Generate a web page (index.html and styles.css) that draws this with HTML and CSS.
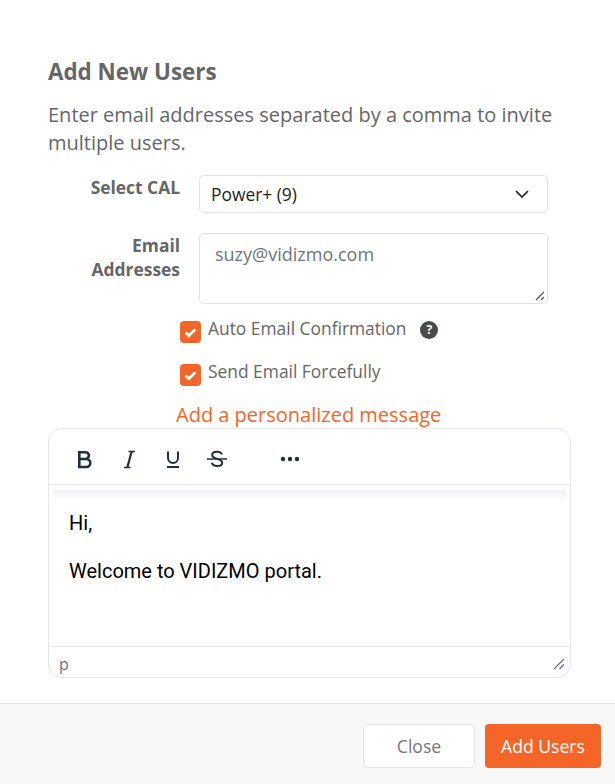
FILE: index.html
```html
<!DOCTYPE html>
<html lang="en">
<head>
    <meta charset="UTF-8">
    <meta name="viewport" content="width=device-width, initial-scale=1.0">
    <title>Add New Users</title>
    <link rel="stylesheet" href="styles.css">
</head>
<body>

<div class="modal-body">
    <h1>Add New Users</h1>
    <p class="intro">Enter email addresses separated by a comma to invite multiple users.</p>

    <div class="form-row cal-row">
        <label class="row-label">Select CAL</label>
        <div class="select-box">
            <span>Power+ (9)</span>
            <svg class="chevron" width="14" height="8" viewBox="0 0 14 8"><path d="M1 1l6 6 6-6" fill="none" stroke="#222" stroke-width="1.7"/></svg>
        </div>
    </div>

    <div class="form-row email-row">
        <label class="row-label">Email Addresses</label>
        <div class="email-box">
            <span>suzy@vidizmo.com</span>
            <svg class="grip" width="10" height="10" viewBox="0 0 10 10"><path d="M1 9l8-8M6 9l3-3" stroke="#555" stroke-width="1.2"/></svg>
        </div>
    </div>

    <div class="check-row first">
        <span class="check-box">
            <svg width="13" height="11" viewBox="0 0 12 10"><path d="M1.5 5l3 3 6-6" fill="none" stroke="#fff" stroke-width="2.6"/></svg>
        </span>
        <span class="check-text">Auto Email Confirmation</span>
        <span class="help-icon">?</span>
    </div>
    <div class="check-row">
        <span class="check-box">
            <svg width="13" height="11" viewBox="0 0 12 10"><path d="M1.5 5l3 3 6-6" fill="none" stroke="#fff" stroke-width="2.6"/></svg>
        </span>
        <span class="check-text">Send Email Forcefully</span>
    </div>

    <div class="message-link">Add a personalized message</div>

    <div class="editor">
        <div class="toolbar">
            <svg class="tool" width="24" height="24" viewBox="0 0 24 24"><path d="M6.300 5.200h6.200a3.400 3.400 0 0 1 0 6.800H6.300zM6.300 12h7a4 4 0 0 1 0 8h-7z" fill="none" stroke="#222f3e" stroke-width="2.600"/></svg>
            <svg class="tool" width="24" height="24" viewBox="0 0 24 24"><path d="M11.500 4.500h6.500M7 20.500h6.500" fill="none" stroke="#222f3e" stroke-width="1.300"/><path d="M14.700 4.500L10.300 20.500" fill="none" stroke="#222f3e" stroke-width="2.200"/></svg>
            <svg class="tool" width="24" height="24" viewBox="0 0 24 24"><path d="M7 4.500v6.500a5 5 0 0 0 10 0V4.500" fill="none" stroke="#222f3e" stroke-width="2"/><path d="M6 20h12" stroke="#222f3e" stroke-width="2"/></svg>
            <svg class="tool" width="24" height="24" viewBox="0 0 24 24"><path d="M17 7.500c-.5-1.800-2.300-2.800-5-2.800-3 0-4.800 1.400-4.800 3.400 0 4.500 10 3 10 7.600 0 2-2 3.300-5 3.300-2.800 0-4.800-1.100-5.300-3.200" fill="none" stroke="#222f3e" stroke-width="2"/><path d="M2 12h20" stroke="#222f3e" stroke-width="1.600"/></svg>
            <svg class="tool more" width="24" height="24" viewBox="0 0 24 24"><circle cx="5" cy="12" r="2.200" fill="#222f3e"/><circle cx="12" cy="12" r="2.200" fill="#222f3e"/><circle cx="19" cy="12" r="2.200" fill="#222f3e"/></svg>
        </div>
        <div class="toolbar-shadow"></div>
        <div class="editor-content">
            <p>Hi,</p>
            <p>Welcome to VIDIZMO portal.</p>
        </div>
        <div class="statusbar">
            <span>p</span>
            <svg width="12" height="12" viewBox="0 0 12 12"><path d="M1 11L11 1M6.500 11L11 6.500" stroke="#6b7280" stroke-width="1.300"/></svg>
        </div>
    </div>
</div>

<div class="modal-footer">
    <a href="#" class="button close">Close</a>
    <a href="#" class="button add">Add Users</a>
</div>

</body>
</html>
```

FILE: styles.css
```css
body {
    font-family: 'Open Sans', sans-serif;
    background-color: #fff;
    color: #666;
    margin: 0;
    padding: 0;
}
.modal-body {
    height: 703px;
    padding: 57px 44px 0 48px;
    box-sizing: border-box;
}
h1 {
    margin: 0;
    font-size: 22.400px;
    line-height: 30px;
    font-weight: 700;
    color: #666;
}
.intro {
    margin: 14px 0 0;
    font-size: 20px;
    line-height: 28px;
    color: #666;
}
.form-row {
    display: flex;
    width: 500px;
}
.cal-row {
    margin-top: 18px;
}
.email-row {
    margin-top: 20px;
}
.row-label {
    width: 132px;
    margin-right: 19px;
    flex-shrink: 0;
    text-align: right;
    font-size: 17.400px;
    line-height: 24px;
    font-weight: 700;
    color: #666;
}
.select-box {
    flex: 1;
    height: 38px;
    box-sizing: border-box;
    border: 1px solid #e3e3e3;
    border-radius: 5px;
    display: flex;
    align-items: center;
    justify-content: space-between;
    padding: 0 18px 0 11px;
    font-size: 17.400px;
    color: #222;
}
.email-box {
    flex: 1;
    height: 71px;
    box-sizing: border-box;
    border: 1px solid #e3e3e3;
    border-radius: 5px;
    padding: 6px 15px;
    font-size: 18px;
    line-height: 28px;
    color: #6c757d;
    position: relative;
}
.grip {
    position: absolute;
    right: 2px;
    bottom: 2px;
}
.check-row {
    display: flex;
    align-items: center;
    margin: 21px 0 0 132px;
    height: 22px;
}
.check-row.first {
    margin-top: 17px;
}
.check-box {
    width: 21px;
    height: 22px;
    border-radius: 4px;
    background-color: #f56528;
    display: flex;
    align-items: center;
    justify-content: center;
    flex-shrink: 0;
}
.check-text {
    margin: 0 0 0 7px;
    font-size: 17.400px;
    position: relative;
    top: -4px;
    color: #666;
}
.help-icon {
    width: 18px;
    height: 18px;
    margin: -4px 0 0 14px;
    border-radius: 50%;
    background-color: #4a4a4a;
    color: #fff;
    font-size: 12px;
    font-weight: 700;
    text-align: center;
    line-height: 18px;
}
.message-link {
    margin: 15px 0 0 128px;
    font-size: 20px;
    line-height: 28px;
    color: #f56528;
}
.editor {
    height: 250px;
    box-sizing: border-box;
    width: 523px;
    margin-top: -1px;
    border: 1px solid #e3e6ea;
    border-radius: 14px;
    display: flex;
    flex-direction: column;
    overflow: hidden;
}
.toolbar {
    height: 56px;
    flex-shrink: 0;
    box-sizing: border-box;
    border-bottom: 1px solid #e3e6ea;
    display: flex;
    align-items: center;
    padding: 4px 0 0 24px;
    gap: 20px;
}
.tool.more {
    margin-left: 29px;
}
.toolbar-shadow {
    height: 5px;
    flex-shrink: 0;
    background-color: #fff;
    position: relative;
}
.toolbar-shadow::after {
    content: "";
    position: absolute;
    top: 100%;
    left: 4px;
    right: 4px;
    height: 12px;
    background: linear-gradient(rgba(34, 47, 62, 0.07), rgba(34, 47, 62, 0));
}
.editor-content {
    flex: 1;
    padding: 21px 20px 0;
    font-family: 'Roboto', sans-serif;
    font-size: 20px;
    line-height: 24px;
    color: #000;
}
.editor-content p {
    margin: 0 0 24px;
}
.statusbar {
    height: 31px;
    flex-shrink: 0;
    box-sizing: border-box;
    border-top: 1px solid #e3e6ea;
    display: flex;
    align-items: center;
    justify-content: space-between;
    padding: 4px 5px 0 10px;
    font-size: 16px;
    color: #6b7280;
}
.modal-footer {
    height: 81px;
    box-sizing: border-box;
    border-top: 1px solid #e0e0e0;
    background-color: #f8f8f8;
    display: flex;
    justify-content: flex-end;
    align-items: flex-start;
    gap: 10px;
    padding: 20px 14px 0 0;
}
.button {
    height: 44px;
    box-sizing: border-box;
    border-radius: 4px;
    display: flex;
    align-items: center;
    justify-content: center;
    font-size: 17.600px;
    text-decoration: none;
}
.button.close {
    width: 112px;
    background-color: #fff;
    border: 1px solid #e5e5e5;
    color: #777;
}
.button.add {
    width: 116px;
    background-color: #f56528;
    color: #fff;
}
```
